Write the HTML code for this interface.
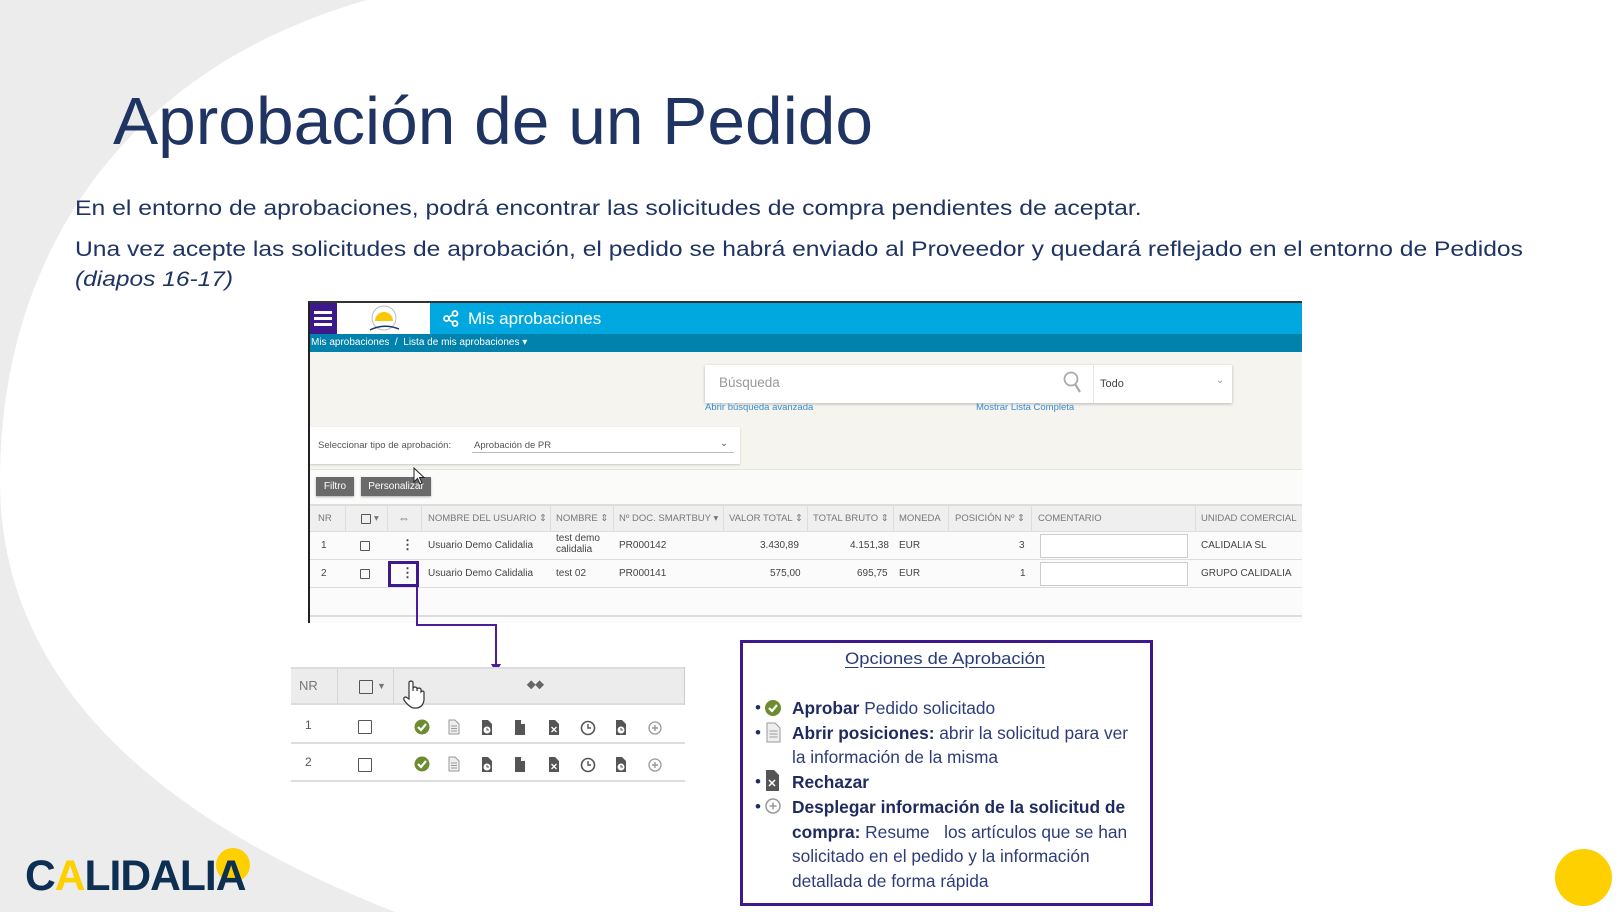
<!DOCTYPE html>
<html><head><meta charset="utf-8"><style>
*{margin:0;padding:0;box-sizing:border-box}
body{width:1620px;height:912px;position:relative;overflow:hidden;background:#ececec;font-family:"Liberation Sans",sans-serif}
.a{position:absolute;white-space:nowrap}
.t{color:#1f3462}
.ui{font-size:10px;color:#444}
.hd{font-size:9.5px;color:#777}
.cb{position:absolute;width:10px;height:10px;border:1.3px solid #555;border-radius:1px}
</style></head><body>
<svg class="a" style="left:0;top:0" width="1620" height="912"><path d="M367,0 C120,70 0,260 0,480 C0,650 110,800 395,912 L1620,912 L1620,0 Z" fill="#fff"/></svg>

<div class="a t" style="left:113px;top:82px;font-size:67px;line-height:80px;transform-origin:0 0;transform:scaleX(1.01)">Aprobación de un Pedido</div>
<div class="a t" style="left:75px;top:195px;font-size:21.5px;line-height:26px;transform-origin:0 0;transform:scaleX(1.15)">En el entorno de aprobaciones, podrá encontrar las solicitudes de compra pendientes de aceptar.</div>
<div class="a t" style="left:75px;top:236px;font-size:21.5px;line-height:26px;transform-origin:0 0;transform:scaleX(1.145)">Una vez acepte las solicitudes de aprobación, el pedido se habrá enviado al Proveedor y quedará reflejado en el entorno de Pedidos</div>
<div class="a t" style="left:75px;top:266px;font-size:21.5px;line-height:26px;font-style:italic;transform-origin:0 0;transform:scaleX(1.14)">(diapos 16-17)</div>

<!-- screenshot -->
<div class="a" style="left:308px;top:301px;width:994px;height:322px;background:#fbfbfa;border-left:2px solid #222;border-top:2px solid #333"></div>
<div class="a" style="left:310px;top:303px;width:992px;height:31px;background:#00a8df"></div>
<div class="a" style="left:310px;top:303px;width:27px;height:31px;background:#3d1a8c"></div>
<div class="a" style="left:314px;top:311px;width:18px;height:3px;background:#fff;box-shadow:0 6px 0 #fff,0 12px 0 #fff"></div>
<div class="a" style="left:337px;top:303px;width:93px;height:31px;background:#fff"></div>
<svg class="a" style="left:366px;top:304px" width="36" height="30"><circle cx="18" cy="14" r="12" fill="none" stroke="#bbb" stroke-width="1"/><path d="M9,17 A9,9 0 0 1 27,17 Z" fill="#fbc700"/><path d="M4,26 Q18,19 33,25" stroke="#1e3563" stroke-width="1.5" fill="none"/></svg>
<svg class="a" style="left:443px;top:310px" width="16" height="17"><circle cx="12" cy="3.5" r="2.5" fill="none" stroke="#fff" stroke-width="1.8"/><circle cx="3.5" cy="8.5" r="2.5" fill="none" stroke="#fff" stroke-width="1.8"/><circle cx="12" cy="13.5" r="2.5" fill="none" stroke="#fff" stroke-width="1.8"/><path d="M5.5,7.3 L10,4.7 M5.5,9.7 L10,12.3" stroke="#fff" stroke-width="1.6"/></svg>
<div class="a" style="left:468px;top:309px;font-size:17px;color:#fff">Mis aprobaciones</div>
<div class="a" style="left:310px;top:334px;width:992px;height:18px;background:#0082ad"></div>
<div class="a" style="left:311px;top:337px;font-size:10px;color:#fff">Mis aprobaciones&nbsp; / &nbsp;Lista de mis aprobaciones ▾</div>
<div class="a" style="left:310px;top:352px;width:992px;height:118px;background:#f6f4ef;border-bottom:1px solid #e4e2dd"></div>
<div class="a" style="left:705px;top:365px;width:527px;height:38px;background:#fff;box-shadow:0 1px 3px rgba(0,0,0,.25)"></div>
<div class="a" style="left:1093px;top:365px;width:1px;height:38px;background:#e6e6e6"></div>
<div class="a" style="left:719px;top:375px;font-size:13.5px;color:#999">Búsqueda</div>
<svg class="a" style="left:1063px;top:371px" width="20" height="24"><circle cx="8" cy="8" r="6.5" fill="none" stroke="#aaa" stroke-width="1.8"/><path d="M12,13 L17,21" stroke="#aaa" stroke-width="2.2"/></svg>
<div class="a" style="left:1100px;top:378px;font-size:11px;color:#444">Todo</div>
<div class="a" style="left:1216px;top:375px;font-size:10px;color:#999">⌄</div>
<div class="a" style="left:705px;top:402px;font-size:9.5px;color:#3a8cd0">Abrir búsqueda avanzada</div>
<div class="a" style="left:976px;top:402px;font-size:9.5px;color:#3a8cd0">Mostrar Lista Completa</div>
<div class="a" style="left:310px;top:427px;width:430px;height:37px;background:#fff;box-shadow:0 1px 2px rgba(0,0,0,.18)"></div>
<div class="a" style="left:318px;top:440px;font-size:9.5px;color:#555">Seleccionar tipo de aprobación:</div>
<div class="a" style="left:472px;top:440px;width:262px;height:13px;border-bottom:1px solid #bbb;font-size:9.5px;color:#555;padding-left:2px">Aprobación de PR<span style="position:absolute;right:6px;top:-2px">⌄</span></div>
<div class="a" style="left:316px;top:477px;width:38px;height:19px;background:#6a6a6a;color:#fff;font-size:10px;text-align:center;line-height:19px;box-shadow:0 1px 2px rgba(0,0,0,.3)">Filtro</div>
<div class="a" style="left:361px;top:477px;width:70px;height:19px;background:#6a6a6a;color:#fff;font-size:10px;text-align:center;line-height:19px;box-shadow:0 1px 2px rgba(0,0,0,.3)">Personalizar</div>
<svg class="a" style="left:413px;top:467px" width="14" height="20"><path d="M1,1 L1,15 L4.5,11.5 L7,17 L9,16 L6.5,10.5 L11,10.5 Z" fill="#fff" stroke="#222" stroke-width="1"/></svg>
<!-- big table -->
<div class="a" style="left:310px;top:504px;width:992px;height:28px;background:#efefef;border-top:2px solid #ddd;border-bottom:1px solid #ddd"></div>
<div class="a" style="left:310px;top:532px;width:992px;height:83px;background:#fbfbfb"></div>
<div class="a" style="left:310px;top:559px;width:992px;height:1px;background:#ddd"></div>
<div class="a" style="left:310px;top:587px;width:992px;height:1px;background:#ddd"></div>
<div class="a" style="left:310px;top:615px;width:992px;height:2px;background:#ddd"></div>
<div class="a hd" style="left:318px;top:513px">NR</div>
<div class="cb" style="left:361px;top:514px"></div><div class="a hd" style="left:374px;top:513px">▾</div>
<div class="a hd" style="left:398px;top:511px;font-size:12px">⇔</div>
<div class="a hd" style="left:428px;top:513px">NOMBRE DEL USUARIO ⇕</div>
<div class="a hd" style="left:556px;top:513px">NOMBRE ⇕</div>
<div class="a hd" style="left:619px;top:513px">Nº DOC. SMARTBUY ▾</div>
<div class="a hd" style="left:729px;top:513px">VALOR TOTAL ⇕</div>
<div class="a hd" style="left:813px;top:513px">TOTAL BRUTO ⇕</div>
<div class="a hd" style="left:899px;top:513px">MONEDA</div>
<div class="a hd" style="left:955px;top:513px">POSICIÓN Nº ⇕</div>
<div class="a hd" style="left:1038px;top:513px">COMENTARIO</div>
<div class="a hd" style="left:1201px;top:513px">UNIDAD COMERCIAL</div>
<div class="a" style="left:345px;top:506px;width:1px;height:25px;background:#ddd;box-shadow:42px 0 #ddd,76px 0 #ddd,205px 0 #ddd,268px 0 #ddd,378px 0 #ddd,462px 0 #ddd,548px 0 #ddd,603px 0 #ddd,686px 0 #ddd,850px 0 #ddd"></div>
<div class="a ui" style="left:321px;top:540px">1</div><div class="cb" style="left:360px;top:541px"></div>
<div class="a ui" style="left:401px;top:537px;font-weight:bold;font-size:13px">⋮</div>
<div class="a ui" style="left:428px;top:540px">Usuario Demo Calidalia</div>
<div class="a ui" style="left:556px;top:533px;line-height:11px">test demo<br>calidalia</div>
<div class="a ui" style="left:619px;top:540px">PR000142</div>
<div class="a ui" style="left:760px;top:540px">3.430,89</div>
<div class="a ui" style="left:850px;top:540px">4.151,38</div>
<div class="a ui" style="left:899px;top:540px">EUR</div>
<div class="a ui" style="left:1019px;top:540px">3</div>
<div class="a" style="left:1040px;top:534px;width:148px;height:24px;background:#fff;border:1px solid #ccc"></div>
<div class="a ui" style="left:1201px;top:540px">CALIDALIA SL</div>
<div class="a ui" style="left:321px;top:568px">2</div><div class="cb" style="left:360px;top:569px"></div>
<div class="a ui" style="left:401px;top:565px;font-weight:bold;font-size:13px">⋮</div>
<div class="a ui" style="left:428px;top:568px">Usuario Demo Calidalia</div>
<div class="a ui" style="left:556px;top:568px">test 02</div>
<div class="a ui" style="left:619px;top:568px">PR000141</div>
<div class="a ui" style="left:770px;top:568px">575,00</div>
<div class="a ui" style="left:857px;top:568px">695,75</div>
<div class="a ui" style="left:899px;top:568px">EUR</div>
<div class="a ui" style="left:1020px;top:568px">1</div>
<div class="a" style="left:1040px;top:562px;width:148px;height:24px;background:#fff;border:1px solid #ccc"></div>
<div class="a ui" style="left:1201px;top:568px">GRUPO CALIDALIA</div>
<div class="a" style="left:388px;top:561px;width:31px;height:26px;border:3px solid #3d1a8c"></div>
<svg class="a" style="left:410px;top:585px" width="95" height="92"><path d="M7,2 L7,40 L86,40 L86,80" stroke="#4a1e9a" stroke-width="2" fill="none"/><path d="M81,79 L91,79 L86,88 Z" fill="#4a1e9a"/></svg>

<!-- small table -->
<div class="a" style="left:291px;top:667px;width:394px;height:38px;background:#ececec;border-top:2px solid #ddd;border-bottom:2px solid #ddd"></div>
<div class="a" style="left:337px;top:669px;width:1px;height:35px;background:#d6d6d6;box-shadow:56px 0 #d6d6d6"></div>
<div class="a" style="left:684px;top:667px;width:1px;height:38px;background:#ccc"></div>
<div class="a" style="left:299px;top:678px;font-size:13px;color:#777">NR</div>
<div class="cb" style="left:359px;top:680px;width:14px;height:14px"></div><div class="a" style="left:377px;top:681px;font-size:9px;color:#777">▼</div>
<div class="a" style="left:527px;top:677px;font-size:12px;color:#666;font-weight:bold">⬥⬥</div>
<svg class="a" style="left:402px;top:679px" width="26" height="32"><path d="M7,13 L7,3 Q9,1 11,3 L11,12 L11,9 Q13,7 15,9 L15,12 L15,10 Q17,8 19,10 L19,13 Q21,11 22,13 L22,21 Q21,28 15,29 L11,29 Q6,27 2,21 Q1,18 4,18 L7,20 Z" fill="#fff" stroke="#333" stroke-width="1.2"/></svg>
<div class="a" style="left:291px;top:742px;width:394px;height:2px;background:#ddd"></div>
<div class="a" style="left:291px;top:780px;width:394px;height:2px;background:#ddd"></div>
<div class="a" style="left:305px;top:718px;font-size:12px;color:#555">1</div>
<div class="a" style="left:305px;top:755px;font-size:12px;color:#555">2</div>
<div class="cb" style="left:358px;top:720px;width:14px;height:14px"></div>
<div class="cb" style="left:358px;top:758px;width:14px;height:14px"></div>

<svg class="a" style="left:412px;top:718px" width="260" height="60">
<defs>
<g id="r">
<circle cx="10" cy="9" r="7.5" fill="#6d8b2f"/><path d="M6,9 L9,12 L14,6" stroke="#fff" stroke-width="2.2" fill="none"/>
<path d="M37,2 h6 l4,4 v10 h-10 z" fill="#eee" stroke="#999" stroke-width="1"/><path d="M39,8h6M39,10.5h6M39,13h6" stroke="#999" stroke-width="1"/>
<path d="M70,2 h6 l4,4 v11 h-10 z" fill="#555"/><circle cx="75" cy="12" r="3.5" fill="#fff"/><path d="M75,10 v2 h2" stroke="#555" stroke-width="1" fill="none"/>
<path d="M103,2 h6 l4,4 v11 h-10 z" fill="#555"/><path d="M109,2 v4 h4" fill="#fff"/>
<path d="M137,2 h6 l4,4 v11 h-10 z" fill="#555"/><path d="M139.5,9 l5,5 M144.5,9 l-5,5" stroke="#fff" stroke-width="1.3"/>
<circle cx="176" cy="10" r="6.5" fill="none" stroke="#555" stroke-width="1.6"/><path d="M176,6 v4 h3" stroke="#555" stroke-width="1.4" fill="none"/>
<path d="M204,2 h6 l4,4 v11 h-10 z" fill="#555"/><circle cx="209" cy="12" r="3.5" fill="#fff"/><path d="M209,10 v2 h2" stroke="#555" stroke-width="1" fill="none"/>
<circle cx="243" cy="10" r="6" fill="none" stroke="#999" stroke-width="1.3"/><path d="M243,7 v6 M240,10 h6" stroke="#999" stroke-width="1.4"/>
</g></defs>
<use href="#r"/><use href="#r" y="37"/>
</svg>

<!-- options box -->
<div class="a" style="left:740px;top:640px;width:413px;height:266px;background:#fff;border:3px solid #3d1a8c"></div>
<div class="a" style="left:845px;top:649px;font-size:17px;color:#2b3b78;text-decoration:underline;text-underline-offset:3px;transform-origin:0 0;transform:scaleX(1.08)">Opciones de Aprobación</div>
<div class="a" style="left:755px;top:696px;font-size:17px;line-height:24.7px;color:#1f2d66">•<br>•<br><br>•<br>•</div>
<svg class="a" style="left:763px;top:698px" width="22" height="120">
<circle cx="10" cy="10" r="8" fill="#6d8b2f"/><path d="M6,10 L9,13 L14,7" stroke="#fff" stroke-width="2.2" fill="none"/>
<path d="M4,25 h8 l5,5 v14 h-13 z" fill="#eee" stroke="#999"/><path d="M6.5,33h8M6.5,36h8M6.5,39h8" stroke="#999"/>
<path d="M3,72 h8 l5,5 v16 h-13 z" fill="#555"/><path d="M6,82 l6,6 M12,82 l-6,6" stroke="#fff" stroke-width="1.5"/>
<circle cx="10" cy="108" r="7" fill="none" stroke="#999" stroke-width="1.5"/><path d="M10,104.5 v7 M6.5,108 h7" stroke="#999" stroke-width="1.5"/>
</svg>
<div class="a" style="left:792px;top:696px;font-size:17.5px;line-height:24.7px;color:#2e3c7a;transform-origin:0 0;transform:scaleX(0.99)"><b style="color:#1f2a5e">Aprobar</b> Pedido solicitado<br><b style="color:#1f2a5e">Abrir posiciones:</b> abrir la solicitud para ver<br>la información de la misma<br><b style="color:#1f2a5e">Rechazar</b><br><b style="color:#1f2a5e">Desplegar información de la solicitud de</b><br><b style="color:#1f2a5e">compra:</b> Resume &nbsp; los artículos que se han<br>solicitado en el pedido y la información<br>detallada de forma rápida</div>

<!-- logo -->
<svg class="a" style="left:20px;top:840px" width="240" height="65"><circle cx="213" cy="25" r="17" fill="#fed000"/></svg>
<div class="a" style="left:25px;top:852px;font-size:43px;font-weight:bold;color:#0d2f52;letter-spacing:-1px;transform-origin:0 0;transform:scaleX(0.99)">C<span style="color:#fed000">A</span>LIDALIA</div>
<div class="a" style="left:1555px;top:849px;width:57px;height:57px;border-radius:50%;background:#fed000"></div>
</body></html>
